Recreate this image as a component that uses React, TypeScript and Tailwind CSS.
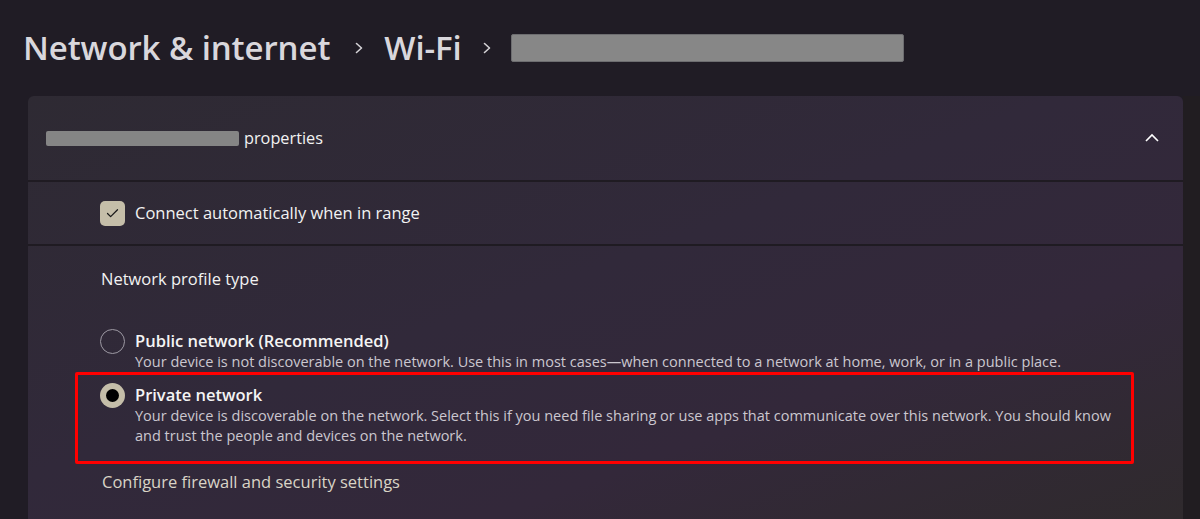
import { Check } from "lucide-react";

const font = { fontFamily: '"Open Sans", "Noto Sans", sans-serif' };

function Chevron() {
  return (
    <svg width="12" height="14" viewBox="0 0 12 14" className="shrink-0">
      <path d="M3.5 2.5 L8.5 7 L3.5 11.5" fill="none" stroke="#d4d2d6" strokeWidth="1.6" strokeLinecap="round" strokeLinejoin="round" />
    </svg>
  );
}

function Radio({ checked }: { checked?: boolean }) {
  return checked ? (
    <div className="w-[25px] h-[25px] rounded-full bg-[#c5bea9] flex items-center justify-center shrink-0">
      <div className="w-[13px] h-[13px] rounded-full bg-black" />
    </div>
  ) : (
    <div className="w-[25px] h-[25px] rounded-full border-[1.5px] border-[#9d99a3] shrink-0" />
  );
}

export default function App() {
  return (
    <div
      className="w-[1200px] h-[519px] overflow-hidden bg-[#201c25] text-white flex flex-col"
      style={font}
    >
      <div className="h-[96px] shrink-0 flex items-center pl-[23px] pb-[1px]">
        <h1 className="text-[33px] font-semibold text-[#d9d7dc] tracking-[-0.1px]">Network &amp; internet</h1>
        <div className="ml-[23px] mr-[19px]">
          <Chevron />
        </div>
        <span className="text-[33px] font-semibold text-[#d9d7dc] tracking-[-0.1px]">Wi-Fi</span>
        <div className="ml-[19px] mr-[18px]">
          <Chevron />
        </div>
        <div className="w-[393px] h-[28px] rounded-[2px] bg-[#878787] border border-[#6d6d70]" />
      </div>

      <div className="flex flex-1">
        <div className="ml-[28px] w-[1155px] rounded-t-[6px] bg-[linear-gradient(160deg,#2e2a33_0%,#31293a_45%,#33283a_70%,#2f2a2d_100%)] flex flex-col">
          <div className="h-[86px] shrink-0 flex items-center pl-[18px] pr-[23px] border-b-2 border-[#1f1b22]">
            <div className="w-[193px] h-[15px] rounded-[2px] bg-[#858585]" />
            <span className="ml-[5px] text-[16.3px] text-[#f2f2f2]">properties</span>
            <svg width="16" height="10" viewBox="0 0 16 10" className="ml-auto">
              <path d="M2 8 L8 2 L14 8" fill="none" stroke="#ffffff" strokeWidth="1.6" strokeLinejoin="miter" />
            </svg>
          </div>

          <div className="h-[64px] shrink-0 flex items-center pl-[72px] border-b-2 border-[#1f1b22]">
            <div className="w-[25px] h-[25px] rounded-[5px] bg-[#c5bea9] flex items-center justify-center">
              <Check className="w-[15px] h-[15px] text-[#1a1a1a]" strokeWidth={2} />
            </div>
            <span className="ml-[10px] text-[16.5px] text-[#f2f2f2]">Connect automatically when in range</span>
          </div>

          <div className="flex flex-col pt-[22px]">
            <p className="pl-[73px] text-[16.5px] leading-[22px] text-[#f2f2f2]">Network profile type</p>

            <div className="mt-[39px] pl-[72px] flex gap-[10px]">
              <Radio />
              <div className="pt-[1px]">
                <p className="text-[16.5px] leading-[22px] font-semibold text-[#f4f4f4]">Public network (Recommended)</p>
                <p className="text-[14.5px] leading-[20px] text-[#cbc7cf]">
                  Your device is not discoverable on the network. Use this in most cases—when connected to a network at home, work, or in a public place.
                </p>
              </div>
            </div>

            <div className="ml-[47px] w-[1059px] h-[92px] border-[3px] border-[#ff0000] rounded-[2px] pl-[22px] pt-[8px] flex gap-[10px]">
              <Radio checked />
              <div className="pt-[1px]">
                <p className="text-[16.5px] leading-[22px] font-semibold text-[#f4f4f4]">Private network</p>
                <p className="text-[14.5px] leading-[20px] text-[#cbc7cf] whitespace-nowrap">
                  Your device is discoverable on the network. Select this if you need file sharing or use apps that communicate over this network. You should know
                  <br />
                  and trust the people and devices on the network.
                </p>
              </div>
            </div>

            <p className="mt-[7px] pl-[74px] text-[16.5px] leading-[22px] text-[#d9d4c6]">Configure firewall and security settings</p>
          </div>
        </div>
        <div className="flex-1 bg-[#211d21]" />
      </div>
    </div>
  );
}
